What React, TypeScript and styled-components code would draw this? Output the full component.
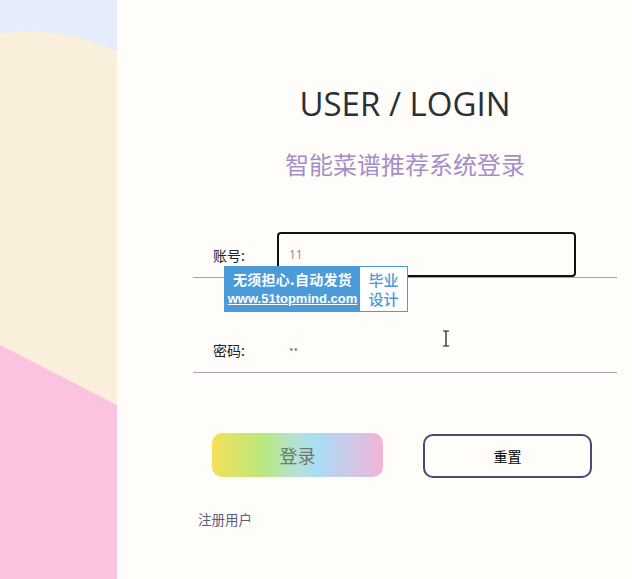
import React from 'react';
import styled, { createGlobalStyle } from 'styled-components';

const GlobalStyle = createGlobalStyle`
  html, body {
    margin: 0;
    padding: 0;
    background: #fffdfa;
  }
  * {
    box-sizing: border-box;
  }
`;

const Page = styled.div`
  display: flex;
  width: 632px;
  height: 579px;
  overflow: hidden;
  position: relative;
  font-family: 'Open Sans', 'Noto Sans CJK SC', sans-serif;
`;

const Side = styled.div`
  width: 117px;
  height: 100%;
  flex-shrink: 0;
  background: #e5edfc;
`;

const Main = styled.div`
  flex: 1;
  background: #fffdfa;
  padding-left: 76px;
`;

const Form = styled.div`
  width: 424px;
  display: flex;
  flex-direction: column;
`;

const Title = styled.h1`
  margin: 82px 0 0;
  font-size: 33px;
  font-weight: 400;
  line-height: 44px;
  color: #2b2f36;
  text-align: center;
`;

const Subtitle = styled.h2`
  margin: 21px 0 0;
  font-family: 'Noto Sans CJK SC', sans-serif;
  font-size: 24px;
  font-weight: 400;
  line-height: 34px;
  color: #a68dc8;
  text-align: center;
`;

const Row = styled.div<{ $h: number }>`
  height: ${(p) => p.$h}px;
  display: flex;
  align-items: flex-end;
  padding: 0 0 13px 20px;
  border-bottom: 1px solid #a99cbb;
`;

const Label = styled.span`
  width: 64px;
  font-family: 'Noto Sans CJK SC', sans-serif;
  font-size: 14px;
  color: #222;
  line-height: 18px;
`;

const Field = styled.div<{ $active?: boolean }>`
  width: 299px;
  height: 45px;
  margin-bottom: -13px;
  display: flex;
  align-items: center;
  padding-left: 10px;
  border: 2px solid ${(p) => (p.$active ? '#111' : 'transparent')};
  border-radius: 4px;
  font-family: 'Open Sans', sans-serif;
  font-size: 12px;
  color: #8a8a8a;
  background: transparent;
`;

const Buttons = styled.div`
  display: flex;
  gap: 40px;
  margin: 60px 0 0 19px;
`;

const LoginButton = styled.button`
  width: 171px;
  height: 44px;
  border: none;
  border-radius: 10px;
  background: linear-gradient(90deg, #f6df58 0%, #b9e87f 30%, #b4e2d8 50%, #a9dcf6 62%, #f2b4d8 100%);
  font-family: 'Noto Sans CJK SC', sans-serif;
  font-size: 18px;
  color: #6f7a6a;
  padding: 0;
`;

const ResetButton = styled.button`
  width: 169px;
  height: 44px;
  margin-top: 1px;
  border: 2px solid #4a4871;
  border-radius: 10px;
  background: #fffdfa;
  font-family: 'Noto Sans CJK SC', sans-serif;
  font-size: 14px;
  font-weight: 400;
  color: #000;
  padding: 0;
`;

const RegisterLink = styled.a`
  margin: 32px 0 0 5px;
  font-family: 'Noto Sans CJK SC', sans-serif;
  font-size: 13.5px;
  color: #5c5a7d;
  line-height: 18px;
`;

const Badge = styled.div`
  position: absolute;
  left: 224px;
  top: 266px;
  width: 184px;
  height: 46px;
  display: flex;
  background: #4b9bd9;
  padding: 1px;
`;

const BadgeText = styled.div`
  flex: 1;
  display: flex;
  flex-direction: column;
  align-items: center;
  justify-content: center;
  color: #fff;
  font-family: 'Noto Sans CJK SC', sans-serif;
  font-weight: 700;
  line-height: 20px;
`;

const BadgeTop = styled.span`
  font-size: 14px;
  letter-spacing: 0.3px;
`;

const BadgeUrl = styled.span`
  font-size: 13px;
  font-family: 'Liberation Sans', 'Noto Sans CJK SC', sans-serif;
  text-decoration: underline;
`;

const BadgeTag = styled.div`
  width: 47px;
  background: #fff;
  display: flex;
  flex-direction: column;
  align-items: center;
  justify-content: center;
  font-family: 'Noto Sans CJK SC', sans-serif;
  font-size: 15px;
  font-weight: 500;
  line-height: 19px;
  color: #4b9bd9;
`;

const Cursor = styled.svg`
  position: absolute;
  left: 442px;
  top: 330px;
`;

const SideArt = () => (
  <svg width="117" height="579" viewBox="0 0 117 579">
    <rect width="117" height="579" fill="#e5edfc" />
    <path d="M0 34 C 30 28, 80 32, 117 52 L117 579 L0 579 Z" fill="#faefdb" />
    <path d="M0 345 L117 405 L117 579 L0 579 Z" fill="#fcc3e1" />
  </svg>
);

export default function App() {
  return (
    <>
      <GlobalStyle />
      <Page>
        <Side>
          <SideArt />
        </Side>
        <Main>
          <Form>
            <Title>USER / LOGIN</Title>
            <Subtitle>智能菜谱推荐系统登录</Subtitle>
            <Row $h={97}>
              <Label>账号:</Label>
              <Field $active>11</Field>
            </Row>
            <Row $h={95}>
              <Label>密码:</Label>
              <Field>••</Field>
            </Row>
            <Buttons>
              <LoginButton>登录</LoginButton>
              <ResetButton>重置</ResetButton>
            </Buttons>
            <RegisterLink>注册用户</RegisterLink>
          </Form>
        </Main>
        <Badge>
          <BadgeText>
            <BadgeTop>无须担心.自动发货</BadgeTop>
            <BadgeUrl>www.51topmind.com</BadgeUrl>
          </BadgeText>
          <BadgeTag>
            <span>毕业</span>
            <span>设计</span>
          </BadgeTag>
        </Badge>
        <Cursor width="8" height="17" viewBox="0 0 8 17">
          <path d="M1 1 H7 M4 1 V16 M1 16 H7" stroke="#111" strokeWidth="1.2" fill="none" />
        </Cursor>
      </Page>
    </>
  );
}
